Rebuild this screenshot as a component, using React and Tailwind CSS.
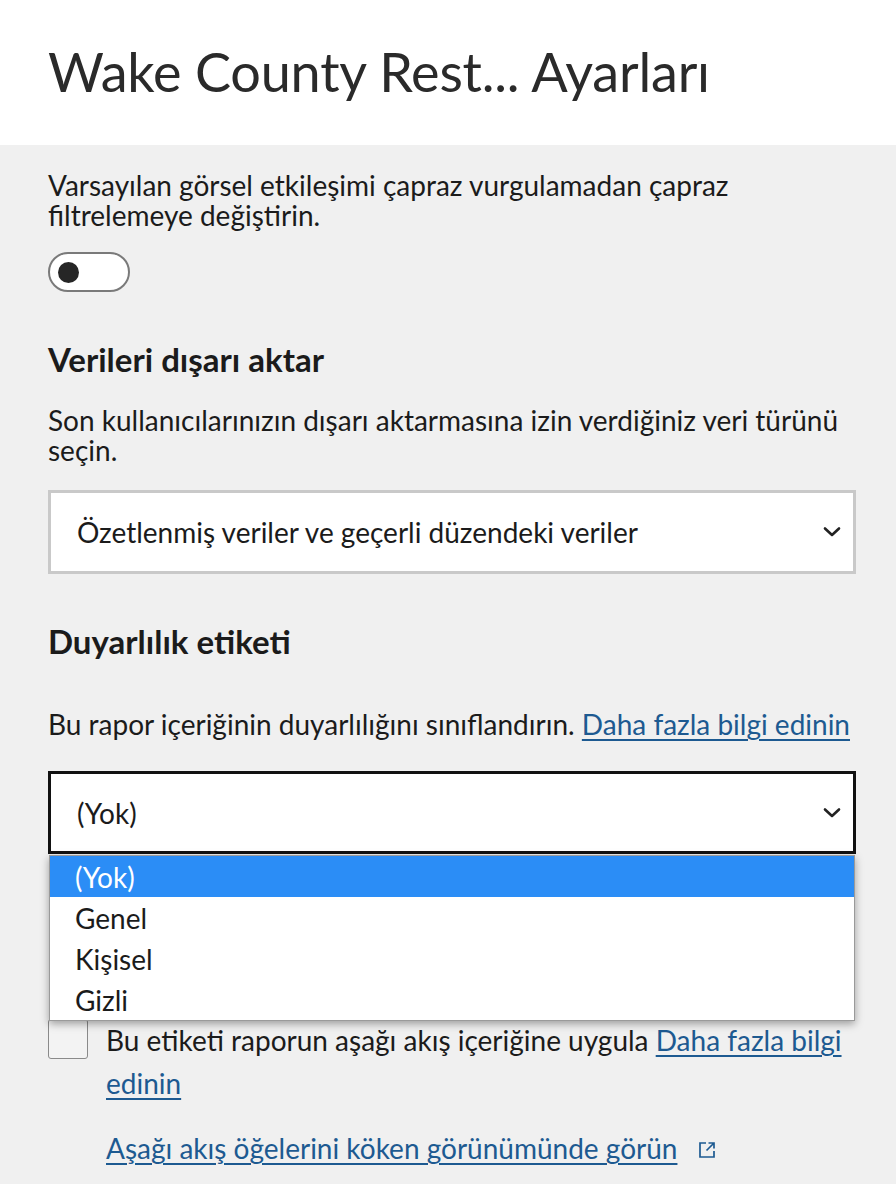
import React from "react";

const font = { fontFamily: "Lato, 'Noto Sans', sans-serif" };

function Chevron() {
  return (
    <svg width="18" height="12" viewBox="0 0 18 12" fill="none">
      <path d="M2 2.5 L9 9 L16 2.5" stroke="#222" strokeWidth="2.6" strokeLinecap="round" strokeLinejoin="round" />
    </svg>
  );
}

function ExternalIcon() {
  return (
    <svg width="20" height="20" viewBox="0 0 20 20" fill="none" className="ml-[20px] inline-block align-middle -mt-[4px]">
      <path d="M9 3 H3 V17 H17 V11" stroke="#1d5a91" strokeWidth="1.7" />
      <path d="M11.5 3 H17 V8.5 M17 3 L9.5 10.5" stroke="#1d5a91" strokeWidth="1.7" />
    </svg>
  );
}

export default function App() {
  return (
    <div className="w-[896px] h-[1184px] overflow-hidden bg-[#f0f0f0] text-[#1b1b1b]" style={font}>
      <header className="h-[145px] bg-white flex items-center pl-12 pb-[2px]">
        <h1 className="text-[54px] leading-none font-normal text-[#2a2a2a] tracking-[-0.2px]">Wake County Rest... Ayarları</h1>
      </header>

      <main className="pl-12 pr-10 relative">
        <p className="mt-[25px] text-[28px] leading-[30px]">
          Varsayılan görsel etkileşimi çapraz vurgulamadan çapraz filtrelemeye değiştirin.
        </p>
        <div className="mt-[22px] w-[82px] h-10 rounded-full border-2 border-[#7a7a7a] bg-white flex items-center pl-[8px]">
          <div className="w-[21px] h-[21px] rounded-full bg-[#262626]" />
        </div>

        <h2 className="mt-[49px] text-[33px] leading-[36px] font-bold">Verileri dışarı aktar</h2>
        <p className="mt-[28px] text-[28px] leading-[30px]">
          Son kullanıcılarınızın dışarı aktarmasına izin verdiğiniz veri türünü seçin.
        </p>
        <div className="mt-[25px] h-[84px] border-[3px] border-[#c9c9c9] bg-white flex items-center justify-between pl-[26px] pr-[12px]">
          <span className="text-[28px]">Özetlenmiş veriler ve geçerli düzendeki veriler</span>
          <Chevron />
        </div>

        <h2 className="mt-[49px] text-[33px] leading-[36px] font-bold">Duyarlılık etiketi</h2>
        <p className="mt-[50px] text-[28px] leading-[30px]">
          Bu rapor içeriğinin duyarlılığını sınıflandırın.{" "}
          <a className="text-[#1d5a91] underline underline-offset-[4px] decoration-[1.5px]">Daha fazla bilgi edinin</a>
        </p>

        <div className="relative mt-[32px]">
          <div className="h-[83px] border-[3px] border-[#111] bg-white flex items-center justify-between pl-[26px] pr-[12px]">
            <span className="text-[28px]">(Yok)</span>
            <Chevron />
          </div>
          <ul className="absolute left-[1px] right-[1px] top-[84px] z-10 bg-white border border-[#9a9a9a] shadow-[0_3px_8px_rgba(0,0,0,0.35)] text-[28px]">
            <li className="h-[41px] flex items-center pl-[25px] bg-[#2b8df6] text-white">(Yok)</li>
            <li className="h-[41px] flex items-center pl-[25px]">Genel</li>
            <li className="h-[41px] flex items-center pl-[25px]">Kişisel</li>
            <li className="h-[41px] flex items-center pl-[25px]">Gizli</li>
          </ul>
        </div>

        <div className="mt-[165px] flex items-start gap-[18px]">
          <div className="w-10 h-10 shrink-0 rounded-[3px] border border-[#8a8a8a] bg-[#f3f3f3]" />
          <p className="text-[28px] leading-[43px]">
            Bu etiketi raporun aşağı akış içeriğine uygula{" "}
            <a className="text-[#1d5a91] underline underline-offset-[4px] decoration-[1.5px]">Daha fazla bilgi edinin</a>
          </p>
        </div>

        <div className="mt-[22px] pl-[58px] text-[28px] leading-[43px]">
          <a className="text-[#1d5a91] underline underline-offset-[4px] decoration-[1.5px]">Aşağı akış öğelerini köken görünümünde görün</a>
          <ExternalIcon />
        </div>
      </main>
    </div>
  );
}
